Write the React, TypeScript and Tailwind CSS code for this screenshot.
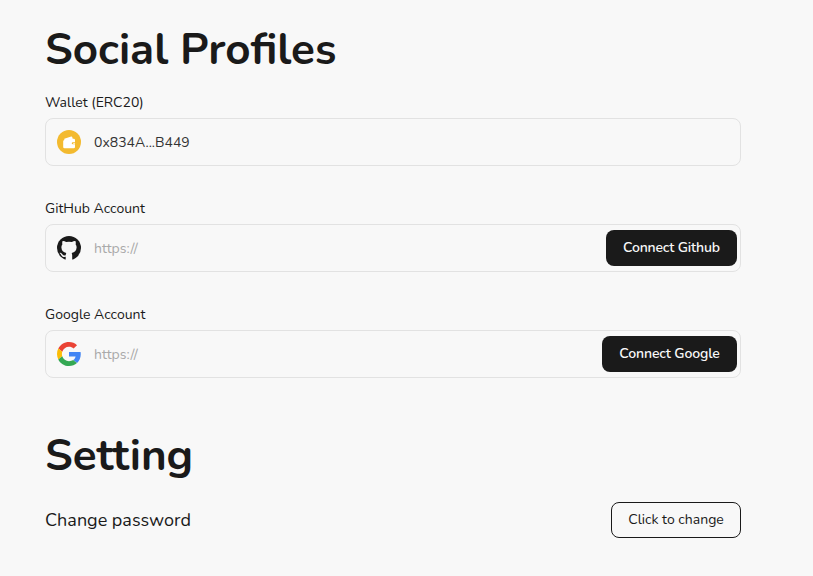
import type { ReactNode } from "react";

function WalletIcon() {
  return (
    <svg viewBox="0 0 24 24" className="size-6 shrink-0">
      <circle cx="12" cy="12" r="12" fill="#f3ba2f" />
      <path
        d="M7.300 8.800 14.200 6.500a.8.8 0 0 1 1 .6l.5 1.700h1a1.300 1.300 0 0 1 1.300 1.300v2.100h-2.200a1.050 1.050 0 0 0 0 2.100h2.200v2.600a1.300 1.300 0 0 1-1.300 1.300H7.500a1.300 1.300 0 0 1-1.300-1.300v-5.600a1.300 1.300 0 0 1 1.100-1.300Z"
        fill="#fff"
      />
      <rect x="16" y="12.900" width="2.200" height=".8" rx="0.4" fill="#fff" />
    </svg>
  );
}

function GithubIcon() {
  return (
    <svg viewBox="0 0 24 24" className="size-6 shrink-0">
      <circle cx="12" cy="12" r="12" fill="#1a1a1a" />
      <path
        fill="#f8f8f8"
        d="M5.600 5c1-.3 2.300.3 3.500 1.100a12 12 0 0 1 5.800 0C16.100 5.300 17.400 4.700 18.400 5c.5 1.200.5 2.300.2 3.200.8 1 1.100 2.100 1 3.400-.2 3.400-2 4.900-4.900 5.400.3.700.5 1.500.5 2.500v4.500H8.700v-3.200c-2.500.5-3.800-.4-4.500-1.900-.3-.8-.8-1.300-1.400-1.700-.3-.3 0-.6.5-.5.9.1 1.500.7 2 1.500.8 1.200 2 1.500 3.400 1 .1-.7.300-1.500.6-2.200-2.900-.5-4.700-2-4.900-5.400-.1-1.300.2-2.400 1-3.400-.3-.9-.3-2 .2-3.200Z"
      />
    </svg>
  );
}

function GoogleIcon() {
  return (
    <svg viewBox="0 0 48 48" className="size-6 shrink-0">
      <path fill="#EA4335" d="M24 9.5c3.54 0 6.71 1.22 9.21 3.6l6.85-6.85C35.9 2.38 30.47 0 24 0 14.62 0 6.51 5.38 2.56 13.22l7.98 6.19C12.43 13.72 17.74 9.5 24 9.5z" />
      <path fill="#4285F4" d="M47.5 24.55c0-1.57-.15-3.09-.38-4.55H24v9.02h13.2c-.58 2.96-2.26 5.48-4.78 7.18l7.73 6c4.51-4.18 7.35-10.36 7.35-17.65z" />
      <path fill="#FBBC05" d="M10.53 28.59c-.48-1.45-.76-2.99-.76-4.59s.27-3.14.76-4.59l-7.98-6.19C.92 16.46 0 20.12 0 24c0 3.88.92 7.54 2.56 10.78l7.97-6.19z" />
      <path fill="#34A853" d="M24 48c6.48 0 11.93-2.13 15.89-5.81l-7.73-6c-2.15 1.45-4.92 2.3-8.16 2.3-6.26 0-11.57-4.22-13.47-9.91l-7.98 6.19C6.51 42.62 14.62 48 24 48z" />
    </svg>
  );
}

function Field({ label, icon, children }: { label: ReactNode; icon: ReactNode; children: ReactNode }) {
  return (
    <div>
      <div className="h-[25px] text-sm leading-5">{label}</div>
      <div className="flex h-12 items-center rounded-lg border border-[#e2e2e2] pr-[3px] pl-[11px]">
        {icon}
        {children}
      </div>
    </div>
  );
}

export default function App() {
  return (
    <main className="h-[576px] bg-[#f8f8f8] pt-[23px] pl-[45px] font-['Nunito','Lato',sans-serif] text-[#1a1a1a]">
      <div className="w-[696px]">
        <h1 className="h-[54px] text-[44px] leading-[54px] font-bold whitespace-nowrap">Social Profiles</h1>
        <div className="mt-4 flex flex-col gap-[33px]">
          <Field label="Wallet (ERC20)" icon={<WalletIcon />}>
            <span className="ml-[13px] pt-0.5 text-sm text-[#333333]">0x834A...B449</span>
          </Field>
          <Field label="GitHub Account" icon={<GithubIcon />}>
            <span className="ml-[13px] pt-0.5 text-sm text-[#a9a9a9]">https://</span>
            <button className="ml-auto h-9 w-[131px] rounded-lg bg-[#1a1a1a] text-sm font-semibold tracking-[-0.16px] text-[#f8f8f8]">Connect Github</button>
          </Field>
          <Field label="Google Account" icon={<GoogleIcon />}>
            <span className="ml-[13px] pt-0.5 text-sm text-[#a9a9a9]">https://</span>
            <button className="ml-auto h-9 w-[135px] rounded-lg bg-[#1a1a1a] text-sm font-semibold tracking-[-0.12px] text-[#f8f8f8]">Connect Google</button>
          </Field>
        </div>
        <h1 className="mt-[51px] h-[54px] text-[44px] leading-[54px] font-bold">Setting</h1>
        <div className="mt-[19px] flex h-9 items-center justify-between">
          <span className="text-lg">Change password</span>
          <button className="h-9 w-[130px] rounded-lg border border-[#1a1a1a] text-sm">Click to change</button>
        </div>
      </div>
    </main>
  );
}
